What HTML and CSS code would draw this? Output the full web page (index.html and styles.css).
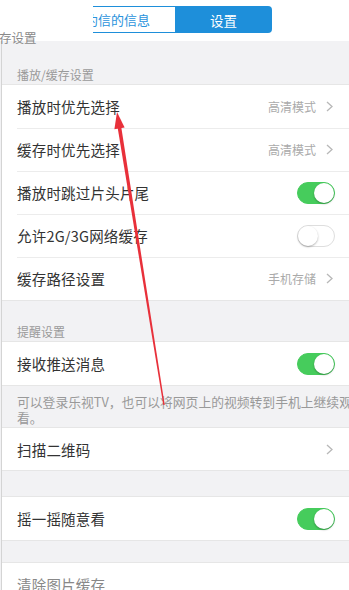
FILE: index.html
```html
<!DOCTYPE html>
<html lang="zh">
<head>
<meta charset="utf-8">
<link rel="stylesheet" href="styles.css">
</head>
<body>
<div class="page">
  <header class="top">
    <div class="seg">
      <div class="seg-left"><span>约信的信息</span></div>
      <div class="seg-right">设置</div>
    </div>
    <div class="top-label">存设置</div>
  </header>
  <main class="content">
    <div class="sec-head">播放/缓存设置</div>
    <div class="group">
      <div class="row"><span class="label">播放时优先选择</span><span class="val">高清模式<svg class="chev" viewBox="0 0 7 11"><polyline points="1,1 6,5.5 1,10"/></svg></span></div>
      <div class="row"><span class="label">缓存时优先选择</span><span class="val">高清模式<svg class="chev" viewBox="0 0 7 11"><polyline points="1,1 6,5.5 1,10"/></svg></span></div>
      <div class="row"><span class="label">播放时跳过片头片尾</span><span class="toggle on"></span></div>
      <div class="row"><span class="label">允许2G/3G网络缓存</span><span class="toggle"></span></div>
      <div class="row"><span class="label">缓存路径设置</span><span class="val">手机存储<svg class="chev" viewBox="0 0 7 11"><polyline points="1,1 6,5.5 1,10"/></svg></span></div>
    </div>
    <div class="sec-head short">提醒设置</div>
    <div class="group">
      <div class="row"><span class="label">接收推送消息</span><span class="toggle on"></span></div>
    </div>
    <div class="note">可以登录乐视TV，也可以将网页上的视频转到手机上继续观<br>看。</div>
    <div class="group">
      <div class="row short"><span class="label">扫描二维码</span><span class="val"><svg class="chev" viewBox="0 0 7 11"><polyline points="1,1 6,5.5 1,10"/></svg></span></div>
    </div>
    <div class="gap gap-a"></div>
    <div class="group">
      <div class="row"><span class="label">摇一摇随意看</span><span class="toggle on"></span></div>
    </div>
    <div class="gap gap-b"></div>
    <div class="group">
      <div class="row"><span class="label light">清除图片缓存</span></div>
    </div>
  </main>
  <svg class="arrow" width="349" height="590" viewBox="0 0 349 590">
    <polygon points="164.7,405.1 163.3,404.9 117.7,128.1 121.3,127.5" fill="#e8303a"/>
    <polygon points="117,112 124.6,127.6 114.4,129.2" fill="#e8303a"/>
  </svg>
</div>
</body>
</html>
```

FILE: styles.css
```css
* { box-sizing: border-box; margin: 0; padding: 0; }
html, body { width: 349px; height: 590px; overflow: hidden; }
body {
  font-family: "Noto Sans CJK SC", "Noto Sans", sans-serif;
  background: #f2f2f4;
  color: #333;
}
.page { position: relative; width: 349px; height: 590px; overflow: hidden; }

.top {
  height: 41px;
  background: #fff;
  padding-top: 6px;
  position: relative;
}
.seg {
  display: flex;
  margin-left: 93px;
  width: 179px;
  height: 27px;
}
.seg-left {
  width: 82px;
  border-top: 1px solid #1e8fda;
  border-bottom: 1px solid #1e8fda;
  background: #fff;
  color: #2a93dc;
  font-size: 13px;
  display: flex;
  align-items: center;
  overflow: hidden;
  white-space: nowrap;
}
.seg-left span { margin-left: -8px; }
.seg-right {
  flex: 1;
  background: #1e8fda;
  color: #fff;
  font-size: 13.5px;
  display: flex;
  align-items: center;
  justify-content: center;
  border-radius: 0 4px 4px 0;
}
.top-label {
  font-size: 12.5px;
  line-height: 14px;
  color: #8a8a8a;
  margin-top: -2px;
  margin-left: -1px;
}

.content {
  border-left: 1px solid #d4d4d4;
  margin-left: 1px;
  height: 549px;
}
.sec-head {
  height: 44px;
  display: flex;
  align-items: flex-end;
  padding: 0 15px 3px;
  font-size: 12px;
  line-height: 14px;
  color: #9a9a9a;
}
.sec-head.short { height: 42px; }
.group {
  background: #fff;
  box-shadow: 0 -1px 0 #e6e6e6, 0 1px 0 #e6e6e6;
}
.row {
  height: 43px;
  display: flex;
  align-items: center;
  justify-content: space-between;
  padding: 0 14px 0 15px;
  position: relative;
}
.row.short { height: 42px; }
.row + .row::before {
  content: "";
  position: absolute;
  left: 15px; right: 0; top: 0;
  border-top: 1px solid #ececec;
}
.label { font-size: 14.5px; color: #333; letter-spacing: 0.2px; }
.label.light { color: #888; }
.val {
  display: flex;
  align-items: center;
  font-size: 12px;
  color: #aaa;
}
.chev {
  width: 7px; height: 11px;
  margin-left: 10px;
  margin-right: 2px;
  fill: none;
  stroke: #b8b8b8;
  stroke-width: 1.3;
}
.toggle {
  width: 38px; height: 22px;
  border-radius: 11px;
  border: 1px solid #dedede;
  background: #fff;
  position: relative;
}
.toggle::after {
  content: "";
  position: absolute;
  top: 0; left: 0;
  width: 20px; height: 20px;
  border-radius: 50%;
  background: #fff;
  box-shadow: 0 1px 2px rgba(0,0,0,0.3);
}
.toggle.on { background: #46cc5c; border-color: #46cc5c; }
.toggle.on::after { left: 16px; }

.note {
  height: 43px;
  padding: 9px 0 0 15px;
  font-size: 12.8px;
  line-height: 16px;
  color: #999;
  white-space: nowrap;
}
.gap-a { height: 27px; }
.gap-b { height: 23px; }

.arrow {
  position: absolute;
  left: 0; top: 0;
  pointer-events: none;
}
```
